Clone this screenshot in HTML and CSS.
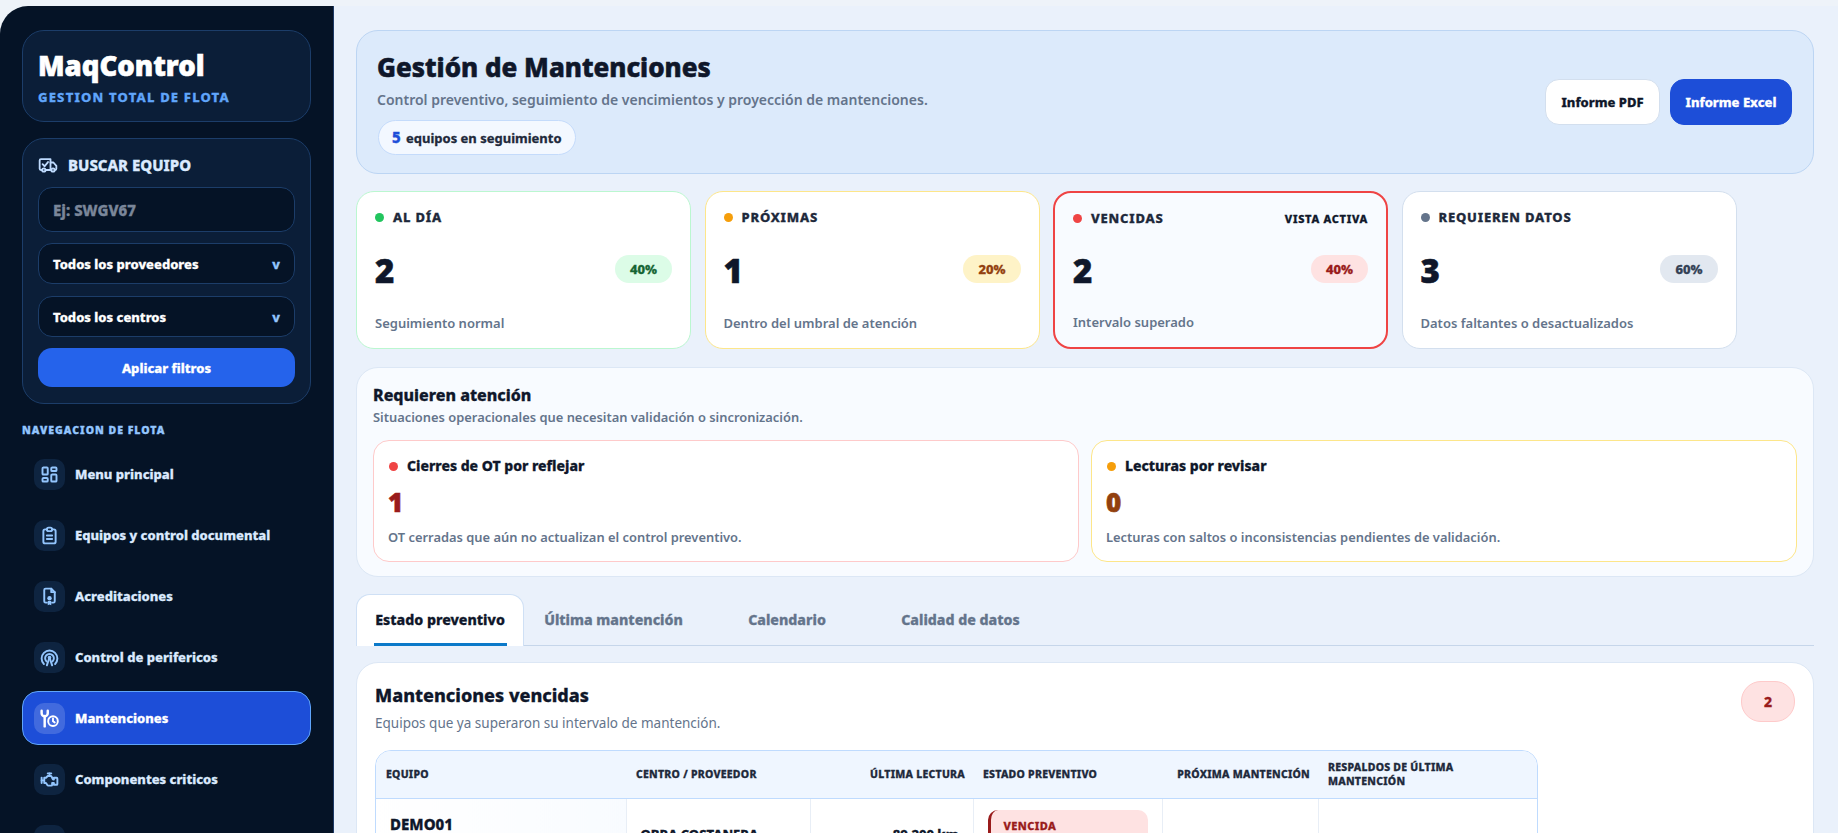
FILE: index.html
```html
<!DOCTYPE html>
<html lang="en">
<head>
    <meta charset="UTF-8">
    <meta name="viewport" content="width=device-width, initial-scale=1.0">
    <title>Gestión de Mantenciones - MaqControl</title>
    <link rel="stylesheet" href="styles.css">
</head>
<body>
    <div class="app">
        <aside class="sidebar">
            <div class="brand-box">
                <div class="brand-name">MaqControl</div>
                <div class="brand-sub">GESTION TOTAL DE FLOTA</div>
            </div>

            <div class="search-box">
                <div class="search-title">
                    <svg class="search-icon" viewBox="0 0 24 24"><path d="M5 18H3.5A1.5 1.5 0 0 1 2 16.5v-10A1.5 1.5 0 0 1 3.5 5H15v13H9"/><path d="M15 9h3.5l3.5 4v3.5a1.5 1.5 0 0 1-1.5 1.5H20"/><path d="M15 18h1"/><circle cx="7" cy="18" r="2"/><circle cx="18" cy="18" r="2"/><path d="M5.5 11l2.5 2.5 4-5"/></svg>
                    BUSCAR EQUIPO
                </div>
                <input class="search-input" type="text" placeholder="Ej: SWGV67">
                <div class="filter-select"><span>Todos los proveedores</span><span class="filter-caret">v</span></div>
                <div class="filter-select"><span>Todos los centros</span><span class="filter-caret">v</span></div>
                <button class="apply-btn">Aplicar filtros</button>
            </div>

            <div class="nav-label">NAVEGACION DE FLOTA</div>
            <nav class="nav-list">
                <a class="nav-item">
                    <span class="nav-icon"><svg viewBox="0 0 24 24"><path d="M5 4h4a1 1 0 0 1 1 1v6a1 1 0 0 1-1 1H5a1 1 0 0 1-1-1V5a1 1 0 0 1 1-1"/><path d="M5 16h4a1 1 0 0 1 1 1v2a1 1 0 0 1-1 1H5a1 1 0 0 1-1-1v-2a1 1 0 0 1 1-1"/><path d="M15 12h4a1 1 0 0 1 1 1v6a1 1 0 0 1-1 1h-4a1 1 0 0 1-1-1v-6a1 1 0 0 1 1-1"/><path d="M15 4h4a1 1 0 0 1 1 1v2a1 1 0 0 1-1 1h-4a1 1 0 0 1-1-1V5a1 1 0 0 1 1-1"/></svg></span>
                    Menu principal
                </a>
                <a class="nav-item">
                    <span class="nav-icon"><svg viewBox="0 0 24 24"><path d="M9 5H7a2 2 0 0 0-2 2v12a2 2 0 0 0 2 2h10a2 2 0 0 0 2-2V7a2 2 0 0 0-2-2h-2"/><path d="M9 5a2 2 0 0 1 2-2h2a2 2 0 0 1 2 2 2 2 0 0 1-2 2h-2a2 2 0 0 1-2-2z"/><path d="M9 12h6"/><path d="M9 16h6"/></svg></span>
                    Equipos y control documental
                </a>
                <a class="nav-item">
                    <span class="nav-icon"><svg viewBox="0 0 24 24"><path d="M9 19H7.5A1.5 1.5 0 0 1 6 17.500v-13A1.5 1.5 0 0 1 7.5 3H14l4 4v10.500a1.5 1.5 0 0 1-1.5 1.5H15"/><path d="M14 3v4h4"/><circle class="icon-fill" cx="12" cy="14" r="2.5"/><path class="icon-fill" d="M10 17v5l2-1 2 1v-5z"/></svg></span>
                    Acreditaciones
                </a>
                <a class="nav-item">
                    <span class="nav-icon"><svg viewBox="0 0 24 24"><path d="M18.4 19.4a9 9 0 1 0-12.8 0"/><path d="M15.5 16.5a5 5 0 1 0-7 0"/><circle cx="12" cy="12" r="1"/><path d="M12 12l-3 9"/><path d="M12 12l3 9"/></svg></span>
                    Control de perifericos
                </a>
                <a class="nav-item active">
                    <span class="nav-icon"><svg viewBox="0 0 24 24"><path class="icon-thick" d="M3 3v3a3.5 3.5 0 0 0 7 0V3"/><path class="icon-thick" d="M6.5 9v12"/><circle cx="16" cy="15" r="5.5"/><path d="M16 12v3l2 1.5"/></svg></span>
                    Mantenciones
                </a>
                <a class="nav-item">
                    <span class="nav-icon"><svg viewBox="0 0 24 24"><path d="M3 10v6"/><path d="M12 5v3"/><path d="M10 5h4"/><path d="M5 13H3"/><path d="M6 10h2l2-2h3.4a1 1 0 0 1 .9.55l1.4 2.9a1 1 0 0 0 .9.55H17v-2h3a1 1 0 0 1 1 1v6a1 1 0 0 1-1 1h-3v-2h-2v2a1 1 0 0 1-1 1h-3.5a1 1 0 0 1-.8-.45L8 16H6z"/></svg></span>
                    Componentes criticos
                </a>
                <a class="nav-item">
                    <span class="nav-icon"></span>
                    Reportes
                </a>
            </nav>
        </aside>

        <main class="content">
            <section class="hero">
                <div class="hero-text">
                    <h1 class="hero-title">Gestión de Mantenciones</h1>
                    <div class="hero-sub">Control preventivo, seguimiento de vencimientos y proyección de mantenciones.</div>
                    <div class="hero-pill"><b>5</b> equipos en seguimiento</div>
                </div>
                <div class="hero-actions">
                    <button class="report-btn">Informe PDF</button>
                    <button class="report-btn excel">Informe Excel</button>
                </div>
            </section>

            <section class="kpi-grid">
                <div class="kpi-card ok">
                    <div class="kpi-head"><i class="dot"></i><span class="kpi-label">AL DÍA</span></div>
                    <div class="kpi-row"><span class="kpi-value">2</span><span class="kpi-pct">40%</span></div>
                    <div class="kpi-note">Seguimiento normal</div>
                </div>
                <div class="kpi-card soon">
                    <div class="kpi-head"><i class="dot"></i><span class="kpi-label">PRÓXIMAS</span></div>
                    <div class="kpi-row"><span class="kpi-value">1</span><span class="kpi-pct">20%</span></div>
                    <div class="kpi-note">Dentro del umbral de atención</div>
                </div>
                <div class="kpi-card late active">
                    <div class="kpi-head"><i class="dot"></i><span class="kpi-label">VENCIDAS</span><span class="kpi-active">VISTA ACTIVA</span></div>
                    <div class="kpi-row"><span class="kpi-value">2</span><span class="kpi-pct">40%</span></div>
                    <div class="kpi-note">Intervalo superado</div>
                </div>
                <div class="kpi-card data">
                    <div class="kpi-head"><i class="dot"></i><span class="kpi-label">REQUIEREN DATOS</span></div>
                    <div class="kpi-row"><span class="kpi-value">3</span><span class="kpi-pct">60%</span></div>
                    <div class="kpi-note">Datos faltantes o desactualizados</div>
                </div>
            </section>

            <section class="attention">
                <div class="attention-title">Requieren atención</div>
                <div class="attention-sub">Situaciones operacionales que necesitan validación o sincronización.</div>
                <div class="attention-grid">
                    <div class="attention-card red">
                        <div class="attention-head"><i class="dot"></i>Cierres de OT por reflejar</div>
                        <div class="attention-value">1</div>
                        <div class="attention-note">OT cerradas que aún no actualizan el control preventivo.</div>
                    </div>
                    <div class="attention-card amber">
                        <div class="attention-head"><i class="dot"></i>Lecturas por revisar</div>
                        <div class="attention-value">0</div>
                        <div class="attention-note">Lecturas con saltos o inconsistencias pendientes de validación.</div>
                    </div>
                </div>
            </section>

            <div class="tabs">
                <div class="tab active">Estado preventivo</div>
                <div class="tab">Última mantención</div>
                <div class="tab">Calendario</div>
                <div class="tab">Calidad de datos</div>
            </div>

            <section class="panel">
                <div class="panel-head">
                    <div>
                        <h2 class="panel-title">Mantenciones vencidas</h2>
                        <div class="panel-sub">Equipos que ya superaron su intervalo de mantención.</div>
                    </div>
                    <div class="panel-count">2</div>
                </div>

                <div class="table-wrap">
                    <table class="maint-table">
                        <colgroup>
                            <col class="col-equipo"><col class="col-centro"><col class="col-lectura"><col class="col-estado"><col class="col-proxima"><col class="col-respaldo">
                        </colgroup>
                        <thead>
                            <tr>
                                <th>EQUIPO</th>
                                <th>CENTRO / PROVEEDOR</th>
                                <th class="num">ÚLTIMA LECTURA</th>
                                <th>ESTADO PREVENTIVO</th>
                                <th class="num">PRÓXIMA MANTENCIÓN</th>
                                <th>RESPALDOS DE ÚLTIMA MANTENCIÓN</th>
                            </tr>
                        </thead>
                        <tbody>
                            <tr>
                                <td class="cell-equipo">DEMO01</td>
                                <td class="cell-centro">OBRA COSTANERA</td>
                                <td class="cell-lectura">89.200 km</td>
                                <td><div class="status-box">VENCIDA</div></td>
                                <td></td>
                                <td></td>
                            </tr>
                        </tbody>
                    </table>
                </div>
            </section>
        </main>
    </div>
</body>
</html>
```

FILE: styles.css
```css
:root {
    --navy: #051326;
    --navy-box: #0b1e38;
    --navy-line: #1c3d69;
    --blue: #1d4ed8;
    --blue-btn: #2563eb;
    --sky: #93c5fd;
    --ink: #0f172a;
    --ink-soft: #1e293b;
    --muted: #64748b;
    --page: #eaf1fb;
}

* { box-sizing: border-box; margin: 0; padding: 0; }

html, body {
    height: 100%;
    overflow: hidden;
}

body {
    font-family: "Noto Sans", "Open Sans", sans-serif;
    background: #eef3f9;
    color: var(--ink);
}

.app {
    display: flex;
    height: 100%;
    padding-top: 6px;
}

/* the installed Noto Sans stops at bold, this thickens the heavy labels */
.search-title, .search-input, .filter-select, .apply-btn, .nav-label, .nav-item,
.hero-pill, .report-btn, .kpi-label, .kpi-active, .kpi-pct, .attention-title,
.attention-head, .tab, .panel-title, .panel-count, .maint-table th, .maint-table td, .brand-sub {
    -webkit-text-stroke: 0.3px currentColor;
}

.brand-name, .hero-title, .kpi-value, .attention-value {
    -webkit-text-stroke: 0.6px currentColor;
}

/* sidebar */
.sidebar {
    width: 334px;
    flex-shrink: 0;
    background: var(--navy);
    border-right: 1px solid #1e3a66;
    border-top-left-radius: 28px;
    padding: 24px 22px 0 22px;
    overflow: hidden;
}

.brand-box {
    height: 92px;
    background: var(--navy-box);
    border: 1px solid var(--navy-line);
    border-radius: 22px;
    padding: 18px 15px 0;
}

.brand-name {
    font-size: 27.5px;
    line-height: 34px;
    font-weight: 900;
    color: #fff;
}

.brand-sub {
    font-size: 13px;
    line-height: 16px;
    margin-top: 6px;
    font-weight: 800;
    letter-spacing: 1.2px;
    color: #60a5fa;
}

.search-box {
    height: 266px;
    margin-top: 16px;
    background: var(--navy-box);
    border: 1px solid var(--navy-line);
    border-radius: 22px;
    padding: 14px 15px 0;
    display: flex;
    flex-direction: column;
}

.search-title {
    display: flex;
    align-items: center;
    gap: 10px;
    height: 24px;
    font-size: 15px;
    font-weight: 800;
    color: #dbeafe;
}

.search-icon {
    width: 20px;
    height: 20px;
    fill: none;
    stroke: #bfdbfe;
    stroke-width: 2.2;
    stroke-linecap: round;
    stroke-linejoin: round;
}

.search-input {
    height: 45px;
    margin-top: 10px;
    background: var(--navy);
    border: 1px solid var(--navy-line);
    border-radius: 14px;
    padding: 0 14px;
    font-family: inherit;
    font-size: 15px;
    font-weight: 800;
    color: #fff;
}

.search-input::placeholder {
    color: #7a8699;
    opacity: 1;
}

.filter-select {
    height: 41px;
    margin-top: 11px;
    background: var(--navy);
    border: 1px solid var(--navy-line);
    border-radius: 14px;
    padding: 0 14px;
    display: flex;
    align-items: center;
    justify-content: space-between;
    font-size: 13px;
    font-weight: 800;
    color: #fff;
}

.filter-select + .filter-select { margin-top: 12px; }

.filter-caret { color: #93c5fd; }

.apply-btn {
    height: 39px;
    margin-top: 11px;
    background: var(--blue-btn);
    border: none;
    border-radius: 14px;
    font-family: inherit;
    font-size: 13px;
    font-weight: 800;
    color: #fff;
}

.nav-label {
    margin-top: 19px;
    height: 14px;
    font-size: 10.5px;
    line-height: 14px;
    font-weight: 900;
    letter-spacing: 1px;
    color: var(--sky);
}

.nav-list {
    margin-top: 10px;
    display: flex;
    flex-direction: column;
    gap: 7px;
}

.nav-item {
    height: 54px;
    flex-shrink: 0;
    display: flex;
    align-items: center;
    gap: 10px;
    padding: 0 11px;
    border: 1px solid transparent;
    border-radius: 16px;
    font-size: 13px;
    font-weight: 800;
    color: #dbeafe;
}

.nav-item.active {
    background: var(--blue);
    border-color: #60a5fa;
    color: #fff;
}

.nav-icon {
    width: 31px;
    height: 31px;
    flex-shrink: 0;
    display: flex;
    align-items: center;
    justify-content: center;
    background: #0e2440;
    border-radius: 10px;
}

.nav-item.active .nav-icon {
    background: rgba(255, 255, 255, 0.16);
}

.nav-icon svg {
    width: 21px;
    height: 21px;
    fill: none;
    stroke: var(--sky);
    stroke-width: 2.2;
    stroke-linecap: round;
    stroke-linejoin: round;
}

.nav-item.active .nav-icon svg { stroke: #fff; }

.nav-icon .icon-fill { fill: var(--sky); stroke: none; }
.nav-icon .icon-thick { stroke-width: 2.8; }

/* main column */
.content {
    flex: 1;
    min-width: 0;
    background: var(--page);
    padding: 24px 24px 0 22px;
    display: flex;
    flex-direction: column;
    overflow: hidden;
}

.hero {
    height: 144px;
    flex-shrink: 0;
    background: #dceafb;
    border: 1px solid #bcd5f3;
    border-radius: 22px;
    padding: 0 21px 0 20px;
    display: flex;
    align-items: center;
    justify-content: space-between;
}

.hero-text { padding-top: 1px; }

.hero-title {
    font-size: 26px;
    line-height: 34px;
    font-weight: 800;
    color: var(--ink);
}

.hero-sub {
    margin-top: 6px;
    font-size: 14px;
    line-height: 20px;
    font-weight: 600;
    color: var(--muted);
}

.hero-pill {
    display: inline-block;
    height: 35px;
    margin-top: 10px;
    margin-left: 1px;
    padding: 0 13px;
    line-height: 33px;
    background: #f3f8ff;
    border: 1px solid #c4dbfb;
    border-radius: 18px;
    font-size: 13px;
    font-weight: 700;
    color: var(--ink-soft);
}

.hero-pill b {
    font-size: 15px;
    font-weight: 800;
    color: var(--blue);
    margin-right: 2px;
}

.hero-actions {
    display: flex;
    gap: 10px;
    margin-bottom: 1px;
}

.report-btn {
    height: 46px;
    width: 115px;
    background: #fff;
    border: 1px solid #d3dfee;
    border-radius: 14px;
    font-family: inherit;
    font-size: 13px;
    font-weight: 800;
    color: var(--ink);
}

.report-btn.excel {
    width: 122px;
    background: var(--blue);
    border-color: var(--blue);
    color: #fff;
}

.kpi-grid {
    display: grid;
    grid-template-columns: repeat(4, 335px);
    gap: 13.5px;
    margin-top: 17px;
    flex-shrink: 0;
}

.kpi-card {
    height: 158px;
    background: #fff;
    border: 1px solid #d3dfee;
    border-radius: 18px;
    padding: 14px 18px 16px;
    display: flex;
    flex-direction: column;
    justify-content: space-between;
}

.kpi-card.ok { border-color: #bbf7d0; }
.kpi-card.soon { border-color: #fde68a; }
.kpi-card.active {
    background: #f8fbff;
    border: 2px solid #ef4444;
}

.kpi-head {
    display: flex;
    align-items: center;
    gap: 9px;
    height: 22px;
}

.dot {
    width: 9px;
    height: 9px;
    border-radius: 50%;
    flex-shrink: 0;
    background: #64748b;
}

.ok .dot { background: #22c55e; }
.soon .dot { background: #f59e0b; }
.late .dot, .red .dot { background: #ef4444; }
.amber .dot { background: #f59e0b; }

.kpi-label {
    font-size: 13px;
    font-weight: 800;
    letter-spacing: 0.8px;
    color: var(--ink-soft);
}

.kpi-active {
    margin-left: auto;
    font-size: 11px;
    font-weight: 800;
    letter-spacing: 0.7px;
    color: var(--ink);
}

.kpi-row {
    display: flex;
    align-items: center;
    justify-content: space-between;
}

.kpi-value {
    font-size: 33px;
    line-height: 40px;
    font-weight: 900;
    color: var(--ink);
}

.kpi-pct {
    height: 28px;
    padding: 0 15px;
    margin-bottom: 5px;
    border-radius: 14px;
    font-size: 13px;
    line-height: 28px;
    font-weight: 800;
}

.ok .kpi-pct { background: #dcfce7; color: #166534; }
.soon .kpi-pct { background: #fef3c7; color: #92400e; }
.late .kpi-pct { background: #fee2e2; color: #991b1b; }
.data .kpi-pct { background: #e2e8f0; color: #334155; }

.kpi-note {
    font-size: 13px;
    line-height: 18px;
    font-weight: 600;
    color: var(--muted);
}

.attention {
    height: 210px;
    flex-shrink: 0;
    margin-top: 18px;
    background: #f8fbff;
    border: 1px solid #dce7f5;
    border-radius: 22px;
    padding: 16px 16px 0;
}

.attention-title {
    font-size: 16px;
    line-height: 22px;
    font-weight: 800;
}

.attention-sub {
    font-size: 12.9px;
    line-height: 18px;
    margin-top: 2px;
    font-weight: 600;
    color: var(--muted);
}

.attention-grid {
    display: grid;
    grid-template-columns: 1fr 1fr;
    gap: 12px;
    margin-top: 14px;
}

.attention-card {
    height: 122px;
    background: #fff;
    border: 1px solid #fecaca;
    border-radius: 16px;
    padding: 14px 14px 0;
}

.attention-card.amber { border-color: #fde68a; }

.attention-head {
    display: flex;
    align-items: center;
    gap: 9px;
    font-size: 14px;
    line-height: 22px;
    font-weight: 800;
    padding-left: 1px;
}

.attention-value {
    margin-top: 8px;
    font-size: 26px;
    line-height: 34px;
    font-weight: 900;
    color: #991b1b;
}

.amber .attention-value { color: #92400e; }

.attention-note {
    margin-top: 9px;
    font-size: 12.9px;
    line-height: 18px;
    font-weight: 600;
    color: var(--muted);
}

.tabs {
    height: 52px;
    flex-shrink: 0;
    margin-top: 17px;
    display: flex;
    gap: 5.5px;
    border-bottom: 1px solid #c6d6ea;
}

.tab {
    width: 168px;
    height: 52px;
    text-align: center;
    line-height: 50px;
    font-size: 14.2px;
    font-weight: 800;
    color: var(--muted);
    border: 1px solid transparent;
    border-radius: 14px 14px 0 0;
    position: relative;
}

.tab.active {
    background: #fff;
    border-color: #cfe0f5;
    border-bottom: none;
    color: var(--ink);
}

.tab.active::after {
    content: "";
    position: absolute;
    left: 17px;
    right: 16px;
    bottom: 0;
    height: 3px;
    background: #0b79c9;
}

.panel {
    flex: 1;
    margin-top: 16px;
    background: #fff;
    border: 1px solid #dce7f5;
    border-radius: 22px 22px 0 0;
    padding: 18px 18px 0 18px;
}

.panel-head {
    display: flex;
    justify-content: space-between;
}

.panel-title {
    font-size: 18px;
    line-height: 28px;
    font-weight: 800;
}

.panel-sub {
    margin-top: 4px;
    font-size: 13.5px;
    line-height: 20px;
    color: var(--muted);
}

.panel-count {
    width: 54px;
    height: 41px;
    line-height: 39px;
    text-align: center;
    background: #fee2e2;
    border: 1px solid #fecaca;
    border-radius: 20px;
    font-size: 14px;
    font-weight: 800;
    color: #991b1b;
}

.table-wrap {
    width: 1163px;
    margin-top: 17px;
    border: 1px solid #bfdbfe;
    border-radius: 16px;
    overflow: hidden;
}

.maint-table {
    width: 100%;
    table-layout: fixed;
    border-collapse: collapse;
}

.col-equipo { width: 250px; }
.col-centro { width: 184px; }
.col-lectura { width: 163px; }
.col-estado { width: 189px; }
.col-proxima { width: 156px; }

.maint-table th {
    height: 47px;
    padding: 0 8px 0 10px;
    background: #eff6ff;
    border-bottom: 1px solid #bfdbfe;
    text-align: left;
    font-size: 10.5px;
    line-height: 14px;
    font-weight: 800;
    letter-spacing: 0.25px;
    color: #1e293b;
}

.maint-table th.num { text-align: right; }

.maint-table td {
    height: 72px;
    padding: 0 14px;
    border-right: 1px solid #e8eef6;
    font-size: 13px;
    font-weight: 800;
}

.maint-table td:last-child { border-right: none; }

.maint-table td.cell-equipo {
    background: linear-gradient(90deg, #fff, #f8fbff);
    font-size: 15px;
    vertical-align: top;
    padding-top: 15px;
}

.cell-lectura { text-align: right; }

.status-box {
    height: 48px;
    padding: 8px 13px;
    background: #fee2e2;
    border-left: 3px solid #991b1b;
    border-radius: 10px;
    font-size: 11px;
    line-height: 16px;
    font-weight: 800;
    letter-spacing: 0.4px;
    color: #991b1b;
}
```
